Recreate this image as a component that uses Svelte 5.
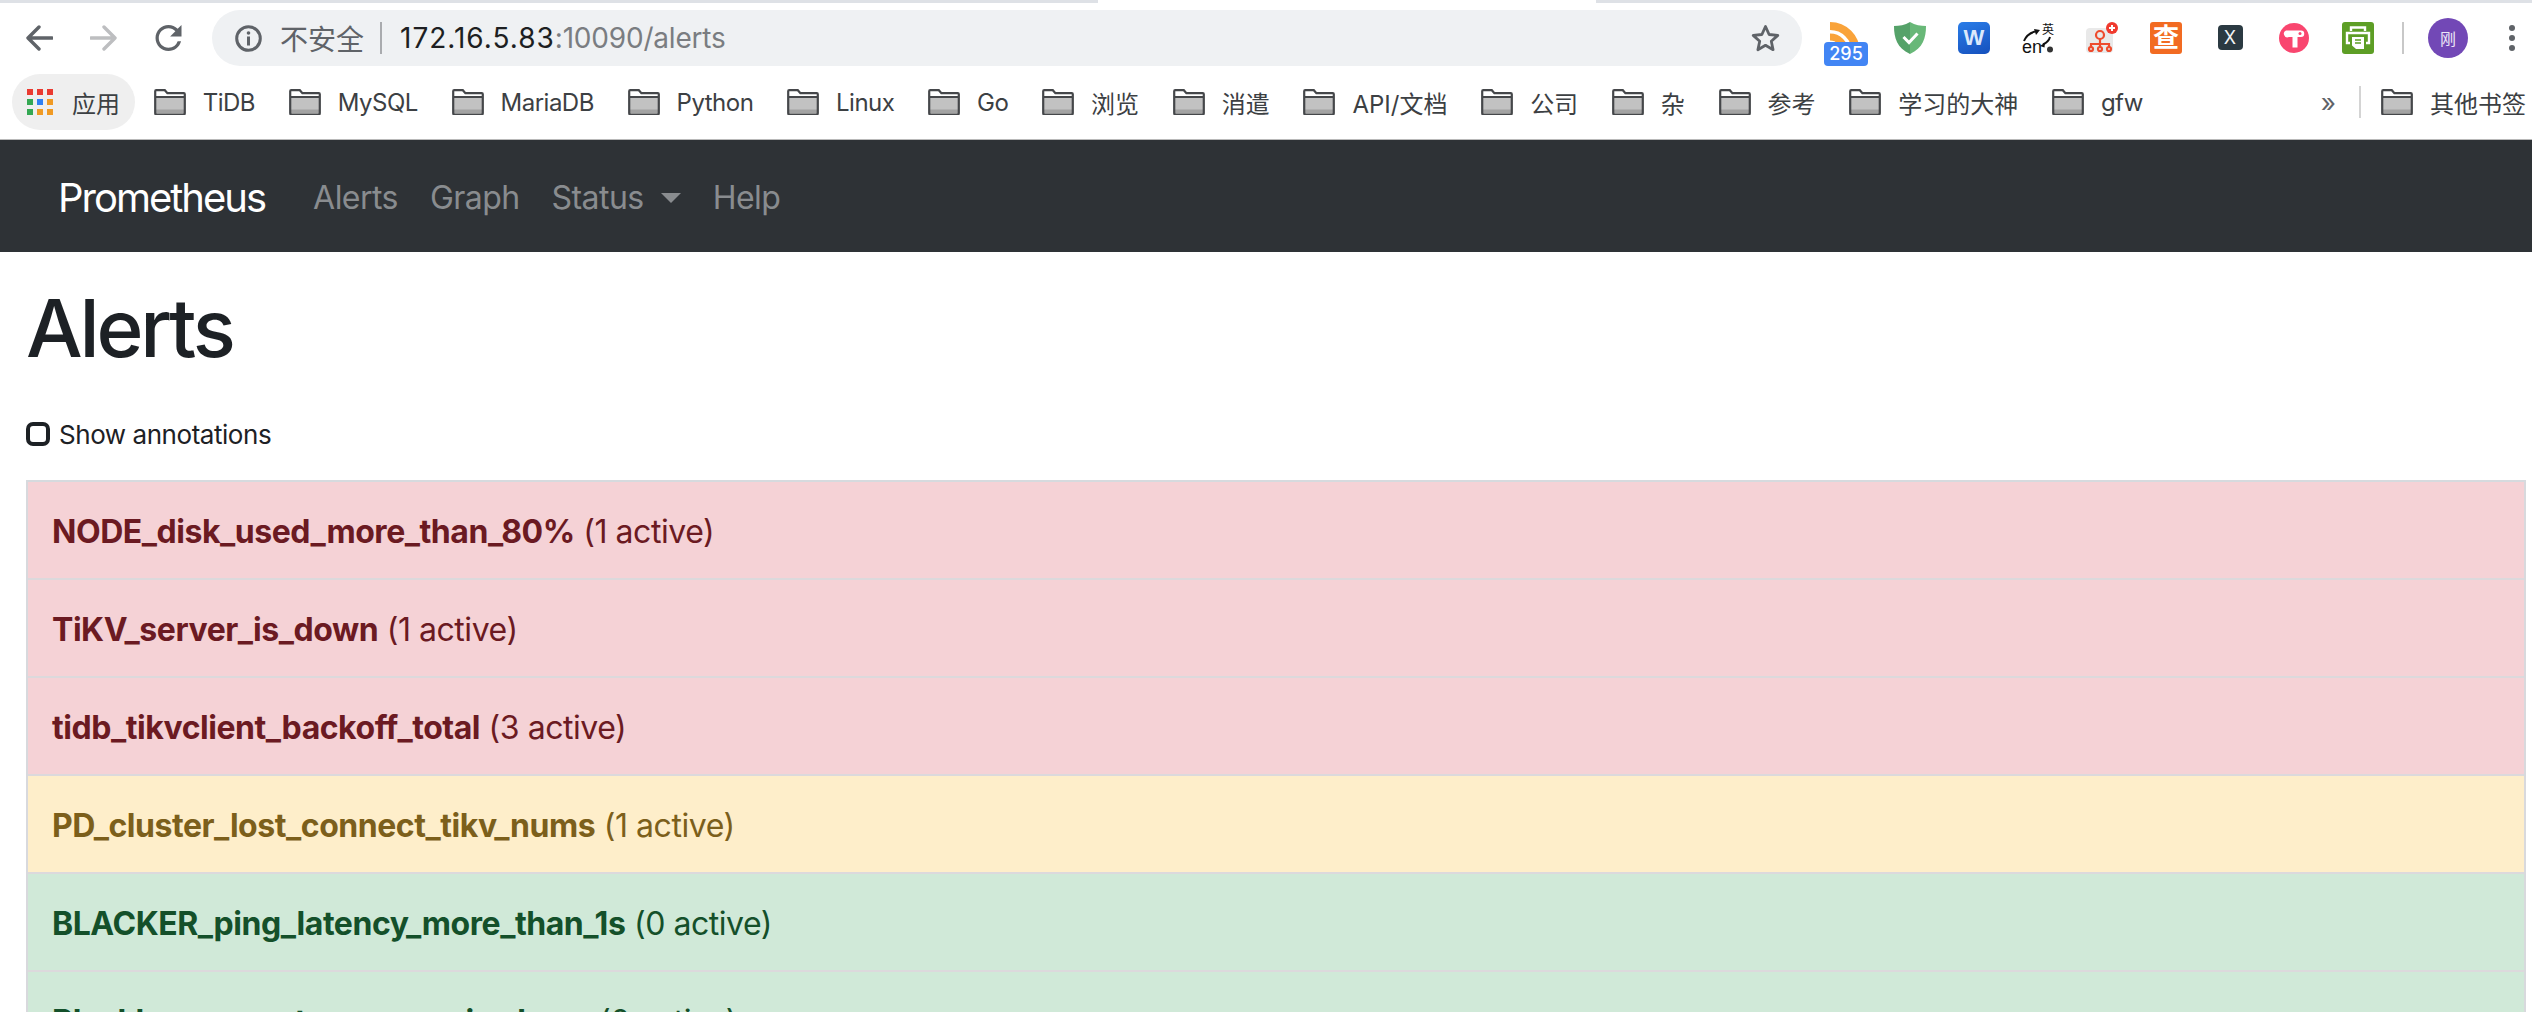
<!--
  Alerts page of Prometheus as seen inside a Chrome window: browser toolbar,
  bookmarks bar, dark navbar, then the list of alert rules coloured by state.
-->
<script>
  const bookmarks = ['TiDB', 'MySQL', 'MariaDB', 'Python', 'Linux', 'Go', '浏览', '消遣', 'API/文档', '公司', '杂', '参考', '学习的大神', 'gfw'];

  const navLinks = [
    { label: 'Alerts' },
    { label: 'Graph' },
    { label: 'Status', caret: true },
    { label: 'Help' }
  ];

  const alerts = [
    { name: 'NODE_disk_used_more_than_80%', count: 1, state: 'firing' },
    { name: 'TiKV_server_is_down', count: 1, state: 'firing' },
    { name: 'tidb_tikvclient_backoff_total', count: 3, state: 'firing' },
    { name: 'PD_cluster_lost_connect_tikv_nums', count: 1, state: 'pending' },
    { name: 'BLACKER_ping_latency_more_than_1s', count: 0, state: 'ok' },
    { name: 'Blackbox_exporter_server_is_down', count: 0, state: 'ok' }
  ];

  const appColors = ['#ea3b31', '#ea3b31', '#ea3b31', '#34a853', '#2f80f4', '#f09a24', '#34a853', '#f09a24', '#f09a24'];

  const isLatin = (s) => /^[\x20-\x7e]+$/.test(s);
</script>

{#snippet folder()}
  <svg class="folder" viewBox="0 0 32 26" aria-hidden="true">
    <path d="M1.200 24.800V2.200q0-1 1-1h8.600l2.600 3h16.400q1 0 1 1v19.600q0 1-1 1H2.200q-1 0-1-1z" fill="#fff" />
    <path d="M1.200 8h29.600v16.800H1.200z" fill="#c2c2c2" />
    <path d="M1.200 20.500h29.600v4.300H1.200z" fill="#a3a3a3" />
    <path d="M1.200 24V2.200q0-1 1-1h8.600l2.600 3h16.400q1 0 1 1v18.800q0 1.800-1.800 1.800H3q-1.800 0-1.800-1.800zM1.200 8h29.600" fill="none" stroke="#45474a" stroke-width="2.200" />
  </svg>
{/snippet}

<div class="strip"><span></span><i></i><span></span></div>

<header class="toolbar">
  <svg class="nav-icon" viewBox="0 0 27 26" aria-hidden="true">
    <path d="M26 13H2.500M13 2 2 13l11 11" fill="none" stroke="#5f6368" stroke-width="3.400" stroke-linecap="round" stroke-linejoin="round" />
  </svg>
  <svg class="nav-icon fwd" viewBox="0 0 27 26" aria-hidden="true">
    <path d="M1 13h23.500M14 2l11 11-11 11" fill="none" stroke="#bdbec0" stroke-width="3.400" stroke-linecap="round" stroke-linejoin="round" />
  </svg>
  <svg class="nav-icon reload" viewBox="4 4 16 16" aria-hidden="true">
    <path fill="#5f6368" d="M17.650 6.350A7.958 7.958 0 0 0 12 4c-4.420 0-7.990 3.580-7.990 8s3.570 8 7.990 8c3.730 0 6.840-2.550 7.730-6h-2.080A5.990 5.990 0 0 1 12 18c-3.310 0-6-2.690-6-6s2.690-6 6-6c1.660 0 3.140.69 4.220 1.780L13 11h7V4l-2.350 2.350z" />
  </svg>

  <div class="omnibox">
    <svg class="info" viewBox="0 0 27 27" aria-hidden="true">
      <circle cx="13.500" cy="13.500" r="11.800" fill="none" stroke="#5f6368" stroke-width="3" />
      <circle cx="13.500" cy="8" r="1.800" fill="#5f6368" />
      <rect x="12" y="11.500" width="3" height="9" fill="#5f6368" />
    </svg>
    <span class="insecure">不安全</span>
    <span class="divider"></span>
    <span class="url">172.16.5.83<span class="url-rest">:10090/alerts</span></span>
    <svg class="star" viewBox="0 0 31 30" aria-hidden="true">
      <path d="M15.500 3.500l3.600 8 8.700.9-6.500 5.800 1.800 8.500-7.600-4.400-7.600 4.400 1.800-8.500-6.500-5.800 8.700-.9z" fill="none" stroke="#5f6368" stroke-width="2.800" stroke-linejoin="round" />
    </svg>
  </div>

  <div class="extensions">
    <div class="ext">
      <svg viewBox="0 0 32 32" aria-hidden="true">
        <path d="M0 4a26 26 0 0 1 26 26" fill="none" stroke="#f9a33a" stroke-width="8" />
        <path d="M0 15a15 15 0 0 1 15 15" fill="none" stroke="#f9a33a" stroke-width="7" />
      </svg>
      <span class="badge">295</span>
    </div>
    <div class="ext">
      <svg viewBox="0 0 32 32" aria-hidden="true">
        <path d="M16 0C11 3 5 4 0 4c0 12 3 22 16 28z" fill="#55a269" />
        <path d="M16 0c5 3 11 4 16 4 0 12-3 22-16 28z" fill="#68b878" />
        <path d="M9.500 15l5.500 5.500 8.500-9" fill="none" stroke="#fff" stroke-width="3" />
      </svg>
    </div>
    <div class="ext wps"><span>W</span></div>
    <div class="ext">
      <svg viewBox="0 0 32 32" aria-hidden="true">
        <text x="20" y="12" font-size="12" fill="#111" font-family="'Noto Sans CJK SC', sans-serif">英</text>
        <text x="0" y="31" font-size="18" fill="#111" font-family="'Liberation Sans', sans-serif">en</text>
        <path d="M2 19c2-5 6-8 11-9.500" fill="none" stroke="#111" stroke-width="2" />
        <path d="M18 8l-6-1 2 6z" fill="#111" />
        <path d="M28 15c-1 4-4 6-7 7.500" fill="none" stroke="#111" stroke-width="2" />
        <path d="M18 24l5-3.500-.5 5z" fill="#111" />
        <circle cx="28" cy="27.500" r="3" fill="#333" />
      </svg>
    </div>
    <div class="ext">
      <svg viewBox="0 0 32 32" aria-hidden="true">
        <rect x="0" y="6" width="27" height="25" rx="4" fill="#e9e9e9" />
        <g fill="none" stroke="#ee4b2d" stroke-width="2.200">
          <circle cx="14" cy="13" r="4" />
          <path d="M14 17v5M5 25v-3h18v3M14 22v3" />
          <circle cx="5" cy="27" r="2" />
          <circle cx="14" cy="27" r="2" />
          <circle cx="23" cy="27" r="2" />
        </g>
        <circle cx="26" cy="6" r="6" fill="#f03a2e" />
        <path d="M26 3v6M23 6h6" stroke="#fff" stroke-width="2" />
      </svg>
    </div>
    <div class="ext cha"><span>查</span></div>
    <div class="ext"><span class="x-mark">X</span></div>
    <div class="ext">
      <svg viewBox="0 0 32 32" aria-hidden="true">
        <circle cx="16" cy="16" r="15" fill="#f9466f" />
        <path d="M8 8.500h15a3.200 3.200 0 0 1 0 6.500h-3.500v10.500h-5V15H11a3.200 3.200 0 0 1-3-6.500z" fill="#fff" />
        <circle cx="22" cy="11.500" r="1.500" fill="#f9466f" />
      </svg>
    </div>
    <div class="ext">
      <svg viewBox="0 0 32 32" aria-hidden="true">
        <rect width="32" height="32" rx="3" fill="#5d9e25" />
        <path d="M9 9V5.500h14V9M8 21H5V11h22v10h-3" fill="none" stroke="#fff" stroke-width="2.400" />
        <path d="M10 15h12v12H14l-4-3.500z" fill="#fff" />
        <path d="M13 18h6M13 21h6" stroke="#5d9e25" stroke-width="1.500" />
      </svg>
    </div>
  </div>

  <span class="tool-sep"></span>
  <span class="avatar">刚</span>
  <span class="dots"><i></i><i></i><i></i></span>
</header>

<div class="bookmarks">
  <div class="apps">
    <svg viewBox="0 0 26 26" aria-hidden="true">
      {#each appColors as color, i}
        <rect x={(i % 3) * 10} y={Math.floor(i / 3) * 10} width="6" height="6" fill={color} />
      {/each}
    </svg>
    <span>应用</span>
  </div>
  {#each bookmarks as name}
    <div class="bookmark">
      {@render folder()}
      <span class:latin={isLatin(name)}>{name}</span>
    </div>
  {/each}
  <div class="bookmarks-end">
    <span class="more">»</span>
    <span class="end-sep"></span>
    <div class="bookmark">
      {@render folder()}
      <span>其他书签</span>
    </div>
  </div>
</div>

<nav class="navbar">
  <span class="brand">Prometheus</span>
  <ul>
    {#each navLinks as link}
      <li class:caret={link.caret}>{link.label}</li>
    {/each}
  </ul>
</nav>

<main class="content">
  <h1>Alerts</h1>
  <label class="toggle">
    <input type="checkbox" />
    Show annotations
  </label>

  <div class="alert-list">
    {#each alerts as alert}
      <div class="alert-row {alert.state}">
        <strong>{alert.name}</strong> ({alert.count} active)
      </div>
    {/each}
  </div>
</main>

<style>
  :global(html), :global(body) {
    height: 1012px;
    overflow: hidden;
  }
  :global(body) {
    background: #fff;
    font-family: Inter, 'Noto Sans CJK SC', sans-serif;
    color: #1d2125;
  }

  .strip {
    display: grid;
    grid-template-columns: 1098px 498px 1fr;
    height: 3px;
  }
  .strip span {
    background: #dee1e6;
  }

  .toolbar {
    display: flex;
    align-items: center;
    height: 70px;
    padding-left: 26px;
  }
  .nav-icon {
    width: 27px;
    height: 26px;
    flex-shrink: 0;
  }
  .fwd {
    margin-left: 37px;
  }
  .reload {
    margin-left: 38px;
  }
  .omnibox {
    display: flex;
    align-items: center;
    width: 1590px;
    height: 56px;
    margin-left: 30px;
    padding: 0 21px 0 23px;
    box-sizing: border-box;
    border-radius: 28px;
    background: #eff1f3;
    flex-shrink: 0;
  }
  .info {
    width: 27px;
    height: 27px;
  }
  .insecure {
    margin-left: 18px;
    font-size: 28px;
    color: #5f6368;
  }
  .divider {
    width: 2px;
    height: 32px;
    margin: 0 18px 0 16px;
    background: #a9abae;
  }
  .url {
    font-size: 28px;
    color: #1d1f22;
    white-space: nowrap;
    letter-spacing: 1px;
  }
  .url-rest {
    color: #7a7d81;
    letter-spacing: -0.2px;
  }
  .star {
    width: 31px;
    height: 30px;
    margin-left: auto;
  }

  .extensions {
    display: flex;
    gap: 32px;
    margin-left: 28px;
  }
  .ext {
    position: relative;
    display: grid;
    place-items: center;
    width: 32px;
    height: 32px;
    margin-top: -1px;
  }
  .ext svg {
    width: 32px;
    height: 32px;
    overflow: hidden;
  }
  .badge {
    position: absolute;
    left: -6px;
    top: 20px;
    width: 44px;
    height: 24px;
    border-radius: 4px;
    background: #4285f4;
    color: #fff;
    font-size: 18px;
    font-weight: 500;
    line-height: 24px;
    text-align: center;
  }
  .wps {
    border-radius: 5px;
    background: linear-gradient(160deg, #2a7de8, #1550bd);
    color: #dbe9fb;
    font: 700 22px 'Liberation Sans', sans-serif;
  }
  .cha {
    border-radius: 3px;
    background: #f26b22;
    color: #fff;
    font-size: 26px;
    font-weight: 700;
    line-height: 32px;
  }
  .x-mark {
    display: grid;
    place-items: center;
    width: 25px;
    height: 25px;
    border-radius: 4px;
    background: #2b3a42;
    color: #f2f4f5;
    font-size: 18px;
  }

  .tool-sep {
    width: 2px;
    height: 32px;
    margin-left: 28px;
    background: #c8c8c8;
  }
  .avatar {
    display: grid;
    place-items: center;
    width: 40px;
    height: 40px;
    margin-left: 24px;
    border-radius: 50%;
    background: #7248b6;
    color: #ece6f6;
    font-size: 16px;
  }
  .dots {
    display: flex;
    flex-direction: column;
    gap: 4px;
    margin-left: 41px;
  }
  .dots i {
    width: 6px;
    height: 6px;
    border-radius: 50%;
    background: #5f6368;
  }

  .bookmarks {
    display: flex;
    align-items: center;
    gap: 33.700px;
    height: 67px;
    padding: 0 6px 8px 12px;
    box-sizing: border-box;
    border-bottom: 1px solid #b9b9b9;
    font-size: 24px;
    color: #3c4043;
    white-space: nowrap;
  }
  .apps {
    display: flex;
    align-items: center;
    gap: 19px;
    height: 56px;
    margin-right: -15px;
    padding: 0 15px;
    border-radius: 28px;
    background: #efefef;
  }
  .apps svg {
    width: 26px;
    height: 26px;
  }
  .bookmark {
    display: flex;
    align-items: center;
    gap: 17px;
  }
  .latin {
    letter-spacing: -0.5px;
  }
  .folder {
    width: 32px;
    height: 26px;
    flex-shrink: 0;
  }
  .bookmarks-end {
    display: flex;
    align-items: center;
    margin-left: auto;
  }
  .more {
    font-size: 26px;
    color: #5f6368;
  }
  .end-sep {
    width: 2px;
    height: 32px;
    margin: 0 20px 0 23px;
    background: #d4d4d4;
  }

  .navbar {
    display: flex;
    align-items: center;
    height: 112px;
    padding: 2px 0 0 58px;
    box-sizing: border-box;
    background: #2e3236;
  }
  .brand {
    font-size: 40px;
    color: #fff;
    letter-spacing: -2px;
  }
  .navbar ul {
    display: flex;
    gap: 32px;
    margin: 0 0 0 48px;
    padding: 0;
    list-style: none;
    font-size: 32px;
    letter-spacing: -0.55px;
    color: #898c8f;
  }
  .caret::after {
    content: '';
    display: inline-block;
    margin-left: 17px;
    vertical-align: 6px;
    border-top: 10px solid #898c8f;
    border-left: 10px solid transparent;
    border-right: 10px solid transparent;
  }

  .content {
    padding: 0 6px 0 26px;
  }
  h1 {
    margin: 28px 0 46px;
    font-size: 80px;
    font-weight: 500;
    line-height: 96px;
    letter-spacing: -3.200px;
    color: #1d2125;
  }
  .toggle {
    display: flex;
    align-items: center;
    gap: 9px;
    height: 24px;
    margin-bottom: 34px;
    font-size: 26px;
    letter-spacing: -0.45px;
  }
  .toggle input {
    appearance: none;
    width: 24px;
    height: 24px;
    margin: 0;
    border: 4px solid #1d2125;
    border-radius: 7px;
  }
  .alert-list {
    border-top: 2px solid #d6dade;
    border-left: 2px solid #d8d9dd;
    border-right: 2px solid #d8d9dd;
  }
  .alert-row {
    height: 48px;
    padding: 26px 24px 22px;
    border-bottom: 2px solid #dcd9dc;
    font-size: 32px;
    line-height: 48px;
    letter-spacing: -0.46px;
  }
  .alert-row strong {
    font-weight: 700;
  }
  .firing {
    background: #f5d2d6;
    color: #6b1a22;
  }
  .pending {
    background: #feeeca;
    color: #7c5f1b;
  }
  .ok {
    background: #d0e9d8;
    color: #14502a;
  }
</style>
